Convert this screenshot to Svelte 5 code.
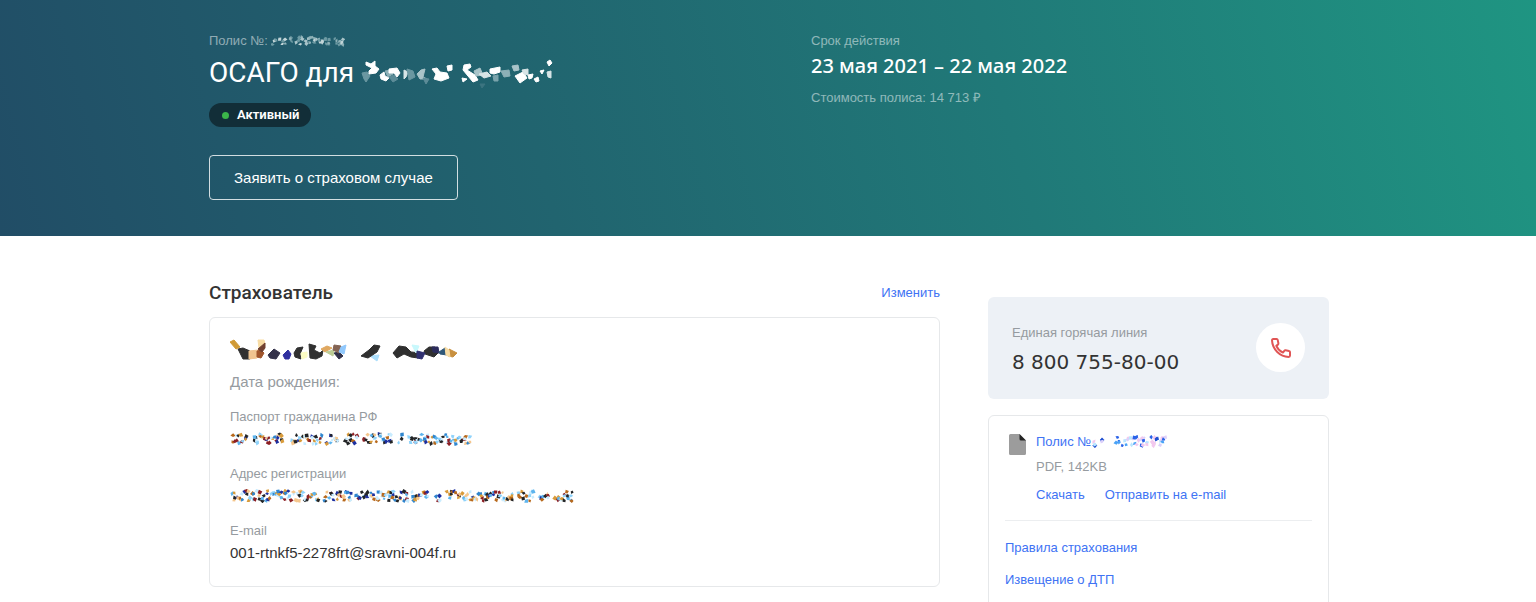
<script>
    /**
     * Redacted values are drawn as a mosaic of small shards.
     * Each run is [start, end] in px along the line.
     */
    const dark = ['#222426', '#222426', '#b8691c', '#d99b3a', '#1c2fa0', '#2f86cf', '#8fd3fb', '#c9ecff', '#8c1f24', '#f5c68c', '#5db4ee'];
    const light = ['#a9c4c9', '#8fb2b8', '#6d9aa3', '#c2d5d8'];
    const blue = ['#2b63e8', '#2b63e8', '#4aa3f7', '#b9e6ff', '#dcd0fa', '#f2c9ee', '#1f4fd0'];

    /**
     * @param {number} seed
     * @param {number[][]} runs
     * @param {number} height
     * @param {string[]} colors
     * @param {number} size
     */
    function shards(seed, runs, height, colors, size) {
        let s = seed;
        const rnd = () => {
            s = (s * 16807) % 2147483647;
            return s / 2147483647;
        };
        rnd();
        const out = [];
        for (const [from, to] of runs) {
            for (let x = from; x < to; x += 1.2) {
                const cx = Math.min(x + rnd() * 3, to);
                const cy = 2 + rnd() * (height - 4);
                const turn = rnd() * Math.PI;
                const pts = [0, 1, 2, 3].map((i) => {
                    const r = size * (0.6 + rnd() * 0.7);
                    const a = turn + (i * Math.PI) / 2;
                    return `${(cx + Math.cos(a) * r).toFixed(1)},${(cy + Math.sin(a) * r).toFixed(1)}`;
                });
                out.push({ points: pts.join(' '), fill: colors[Math.floor(rnd() * colors.length)] });
            }
        }
        return out;
    }

    const ownerShards = [
        { fill: '#303030', points: '8,10 13,9 20,12 20,20 13,20' },
        { fill: '#d09a35', points: '0,3 4,1 10,8 6,10' },
        { fill: '#f0c490', points: '19,12 28,11 27,19 19,20' },
        { fill: '#f8dca4', points: '28,1 34,1 35,5 29,9' },
        { fill: '#a0552c', points: '27,12 31,11 34,14 31,19 27,18' },
        { fill: '#704030', points: '28,10 35,4 35,9 32,13' },
        { fill: '#34324a', points: '38,16 44,10 50,14 46,20 40,19' },
        { fill: '#3030a0', points: '53,16 58,11 61,15 59,20 55,20' },
        { fill: '#303030', points: '64,14 67,9 73,8 70,15 71,20 65,18' },
        { fill: '#fcfcc4', points: '71,14 77,13 77,18 72,20' },
        { fill: '#303030', points: '79,5 86,7 84,11 90,14 93,11 92,17 86,20 80,19' },
        { fill: '#e0a860', points: '91,10 97,7 102,9 95,13' },
        { fill: '#303048', points: '104,14 109,13 113,17 109,20' },
        { fill: '#bccb94', points: '96,13 104,11 103,17' },
        { fill: '#846454', points: '104,6 111,7 109,14 103,11' },
        { fill: '#90c8fc', points: '111,8 116,6 114,15 109,13' },
        { fill: '#acdffc', points: '140,17 149,16 147,22' },
        { fill: '#303030', points: '131,17 139,11 144,6 150,7 147,13 138,19' },
        { fill: '#303030', points: '163,14 169,7 176,8 181,13 192,14 188,19 181,18 174,15 167,19' },
        { fill: '#c8f8fc', points: '182,6 189,7 186,14' },
        { fill: '#303030', points: '194,12 199,8 205,8 208,14 204,18 195,15' },
        { fill: '#303070', points: '187,12 195,14 192,20 187,19' },
        { fill: '#2c2c5c', points: '202,8 208,8 209,14 203,13' },
        { fill: '#305878', points: '209,13 215,9 217,16 210,15' },
        { fill: '#c89040', points: '219,10 227,14 223,18 218,17' },
        { fill: '#f8dca4', points: '215,8 219,11 220,18 216,16' },
    ];

    const nameShards = [
        { fill: '#6a97a1', points: '1,14 6,13 9,17 5,23 3,20' },
        { fill: '#fff', points: '5,3 10,5 14,2 14,7 18,10 15,14 8,15 8,12 11,9 5,6' },
        { fill: '#8db0b7', points: '24,12 30,11 32,15 27,18' },
        { fill: '#fff', points: '19,16 23,13 24,17 28,19 25,22 20,20' },
        { fill: '#5d8c98', points: '28,18 33,16 37,20 32,23' },
        { fill: '#fff', points: '28,10 36,9 39,14 36,18 33,14 28,14' },
        { fill: '#d7e4e6', points: '43,11 47,13 45,18 43,20' },
        { fill: '#6a97a1', points: '46,10 52,12 54,18 48,21' },
        { fill: '#a9c4c9', points: '56,15 60,11 64,10 62,18 66,20 59,20' },
        { fill: '#5d8c98', points: '62,19 68,20 65,25' },
        { fill: '#fff', points: '71,10 76,9 79,13 86,14 88,19 80,22 73,20 75,15' },
        { fill: '#fff', points: '86,7 91,6 91,11 87,12' },
        { fill: '#fff', points: '103,6 109,5 110,8 106,11 114,16 117,21 112,23 107,17 102,11' },
        { fill: '#fff', points: '101,19 106,20 102,23' },
        { fill: '#a9c4c9', points: '113,12 119,9 122,16 115,17' },
        { fill: '#d7e4e6', points: '118,15 126,13 130,17 123,19' },
        { fill: '#fff', points: '129,10 139,8 139,13 133,15 129,14' },
        { fill: '#7aa3ab', points: '132,17 137,16 137,22 133,22' },
        { fill: '#3c7480', points: '119,25 124,25 121,29' },
        { fill: '#8db0b7', points: '140,12 148,11 149,17 143,18' },
        { fill: '#a9c4c9', points: '151,7 157,6 158,11 153,12' },
        { fill: '#fff', points: '154,17 162,13 166,19 159,24' },
        { fill: '#d7e4e6', points: '161,11 167,10 167,16 163,15' },
        { fill: '#fff', points: '167,16 172,15 171,19 168,20' },
        { fill: '#fff', points: '173,20 177,18 178,22 175,23' },
        { fill: '#fff', points: '179,12 183,11 181,15' },
        { fill: '#fff', points: '186,3 189,1 191,4 188,7' },
        { fill: '#d7e4e6', points: '186,13 190,12 190,19 187,18' },
    ];

    const passport = shards(1100, [[1, 16], [22, 53], [60, 92], [95, 108], [113, 127], [132, 161], [168, 172], [178, 240]], 14, dark, 2.2);
    const address = shards(2900, [[1, 88], [93, 121], [125, 198], [204, 210], [216, 282], [287, 303], [309, 318], [324, 342]], 14, dark, 2.2);
    const policyNumber = shards(700, [[1, 5], [8, 14], [18, 21], [25, 58], [62, 72]], 12, light, 2);
    const fileNumber = shards(1700, [[1, 4], [8, 11], [24, 28], [31, 56], [58, 74]], 13, blue, 2.2);
</script>

{#snippet redacted(cls, width, height, items)}
    <svg class={cls} {width} {height} viewBox="0 0 {width} {height}" aria-hidden="true">
        {#each items as item}
            <polygon points={item.points} fill={item.fill} stroke={item.fill} />
        {/each}
    </svg>
{/snippet}

<header class="hero">
    <div class="container hero-grid">
        <div>
            <p class="hero-note">Полис №: {@render redacted('inline', 74, 12, policyNumber)}</p>
            <h1>ОСАГО для {@render redacted('inline-title bold', 194, 30, nameShards)}</h1>
            <span class="status">Активный</span>
            <button class="claim-btn" type="button">Заявить о страховом случае</button>
        </div>
        <div>
            <p class="hero-note">Срок действия</p>
            <p class="period">23 мая 2021 – 22 мая 2022</p>
            <p class="hero-note">Стоимость полиса: 14 713 ₽</p>
        </div>
    </div>
</header>

<main class="container content">
    <section>
        <div class="section-head">
            <h2>Страхователь</h2>
            <a class="link" href="#edit">Изменить</a>
        </div>
        <div class="card owner">
            {@render redacted('owner-name bold', 230, 24, ownerShards)}
            <p class="birth">Дата рождения:</p>
            <dl>
                <dt>Паспорт гражданина РФ</dt>
                <dd>{@render redacted('line', 244, 14, passport)}</dd>
                <dt>Адрес регистрации</dt>
                <dd>{@render redacted('line', 346, 14, address)}</dd>
                <dt>E-mail</dt>
                <dd>001-rtnkf5-2278frt@sravni-004f.ru</dd>
            </dl>
        </div>
    </section>

    <aside>
        <div class="hotline">
            <div class="hotline-text">
                <p class="label">Единая горячая линия</p>
                <p class="phone">8 800 755-80-00</p>
            </div>
            <a class="call" href="tel:88007558000" aria-label="Позвонить">
                <svg width="20" height="20" viewBox="0 0 20 20" fill="none" stroke="#e05555" stroke-width="2" stroke-linejoin="round">
                    <path d="M2.200 1H5.600c.6 0 1 .4 1.100.9l.7 3.400c.1.500-.1 1-.5 1.300L5.300 7.900c1.300 2.900 3.600 5.300 6.600 6.700l1.400-1.800c.3-.4.8-.6 1.300-.5l3.400.7c.6.1 1 .6 1 1.100v3.500c0 .8-.6 1.400-1.400 1.400C9 18.500 1.500 11.500 1 2.400 1 1.600 1.500 1 2.200 1z" />
                </svg>
            </a>
        </div>

        <div class="card docs">
            <div class="file">
                <svg class="file-icon" width="17" height="21" viewBox="0 0 17 21" aria-hidden="true">
                    <path d="M1.500 0H10.500L17 6.500V19.500a1.500 1.500 0 0 1-1.500 1.500H1.500A1.500 1.500 0 0 1 0 19.500V1.500A1.500 1.500 0 0 1 1.500 0z" fill="#9c9c9c" />
                    <path d="M10.500 0 17 6.500h-5a1.500 1.500 0 0 1-1.500-1.500z" fill="#242424" />
                </svg>
                <div>
                    <a class="link" href="#policy">Полис №{@render redacted('inline', 76, 13, fileNumber)}</a>
                    <p class="label file-meta">PDF, 142KB</p>
                    <div class="file-actions">
                        <a class="link" href="#download">Скачать</a>
                        <a class="link" href="#send">Отправить на e-mail</a>
                    </div>
                </div>
            </div>
            <ul>
                <li><a class="link" href="#rules">Правила страхования</a></li>
                <li><a class="link" href="#notice">Извещение о ДТП</a></li>
            </ul>
        </div>
    </aside>
</main>

<style>
    :global(body) {
        background: #fff;
        color: #333;
        font-family: "Liberation Sans", Arial, sans-serif;
        font-size: 13px;
        line-height: 20px;
    }
    p, h1, h2, dl, dd, ul {
        margin: 0;
        padding: 0;
    }
    .container {
        box-sizing: border-box;
        max-width: 1122px;
        margin: 0 auto;
        padding-left: 2px;
    }

    /* Hero */
    .hero {
        padding: 31px 0 36px;
        background: linear-gradient(75deg, #214d66 0%, #21646f 35%, #207978 65%, #1f9582 100%);
        color: #fff;
    }
    .hero-grid {
        display: grid;
        grid-template-columns: 602px 1fr;
    }
    .hero-note {
        color: rgba(255, 255, 255, 0.5);
    }
    .inline {
        vertical-align: -2px;
    }
    polygon {
        stroke-width: 0;
    }
    .bold polygon {
        stroke-width: 1px;
        stroke-linejoin: round;
    }
    h1 {
        margin-bottom: 9px;
        font-family: Roboto, sans-serif;
        font-size: 28px;
        font-weight: 400;
        line-height: 43px;
        white-space: nowrap;
    }
    .inline-title {
        vertical-align: -7px;
    }
    .status {
        display: flex;
        align-items: center;
        gap: 8px;
        width: fit-content;
        height: 24px;
        padding: 0 12px 0 13px;
        border-radius: 12px;
        background: #122e38;
        font-family: Roboto, sans-serif;
        font-weight: 600;
    }
    .status::before {
        content: '';
        width: 7px;
        height: 7px;
        border-radius: 50%;
        background: #3bb54a;
    }
    .claim-btn {
        height: 45px;
        margin-top: 28px;
        padding: 0 24px;
        border: 1px solid rgba(255, 255, 255, 0.8);
        border-radius: 4px;
        background: transparent;
        color: #fff;
        font-family: inherit;
        font-size: 15px;
    }
    .period {
        margin-bottom: 8px;
        font-family: "Noto Sans", sans-serif;
        font-size: 20px;
        font-weight: 500;
        line-height: 29px;
    }

    /* Content */
    .content {
        display: grid;
        grid-template-columns: 731px 341px;
        justify-content: space-between;
        align-items: start;
        padding-top: 44px;
    }
    .link {
        color: #4073f4;
        text-decoration: none;
    }
    .label,
    dt {
        color: #969ba0;
    }
    .card {
        border: 1px solid #e6e8ea;
        border-radius: 6px;
    }
    .section-head {
        display: flex;
        align-items: center;
        justify-content: space-between;
        margin-bottom: 11px;
    }
    h2 {
        font-family: Roboto, sans-serif;
        font-size: 19px;
        font-weight: 500;
        line-height: 26px;
    }
    .owner {
        padding: 21px 20px;
    }
    .owner-name {
        display: block;
    }
    .birth {
        margin: 9px 0 15px;
        color: #969ba0;
        font-size: 15px;
    }
    dd {
        height: 24px;
        margin-bottom: 13px;
        font-size: 15px;
        line-height: 24px;
    }
    dd:last-child {
        margin-bottom: 0;
    }
    .line {
        display: block;
        padding-top: 5px;
    }

    /* Sidebar */
    aside {
        padding-top: 17px;
    }
    .hotline {
        display: flex;
        align-items: center;
        justify-content: space-between;
        margin-bottom: 16px;
        padding: 22px 24px 23px;
        border-radius: 6px;
        background: #edf1f6;
    }
    .hotline-text {
        padding-top: 4px;
    }
    .phone {
        margin-top: 5px;
        font-family: "DejaVu Sans", sans-serif;
        font-size: 20px;
        line-height: 28px;
    }
    .call {
        display: flex;
        align-items: center;
        justify-content: center;
        width: 49px;
        height: 49px;
        border-radius: 50%;
        background: #fff;
    }
    .docs {
        padding: 16px;
    }
    .file {
        display: flex;
        gap: 10px;
        padding: 0 4px 15px;
        border-bottom: 1px solid #eceef0;
    }
    .file-icon {
        margin-top: 2px;
    }
    .file-meta {
        margin: 5px 0 8px;
    }
    .file-actions {
        display: flex;
        gap: 20px;
    }
    ul {
        padding-top: 17px;
        list-style: none;
    }
    li {
        margin-bottom: 12px;
    }
</style>
